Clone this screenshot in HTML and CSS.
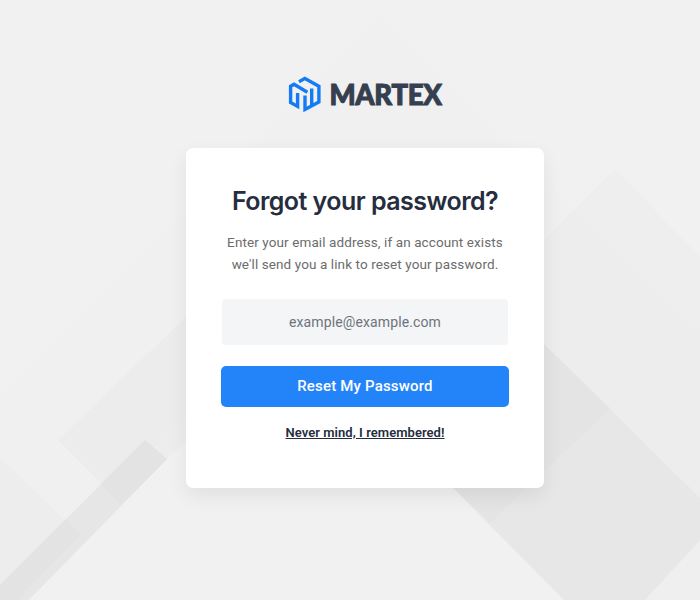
FILE: index.html
```html
<!DOCTYPE html>
<html lang="en">
<head>
<meta charset="utf-8">
<title>Martex</title>
<link rel="stylesheet" href="styles.css">
</head>
<body>
<svg class="backdrop" viewBox="0 0 700 600" aria-hidden="true">
  <path fill="#000" fill-opacity=".004" d="M380 15 0 395V600L370 238 700 560V335Z"/>
  <path fill="#000" fill-opacity=".012" d="M615 169 445 339 700 594V256Z"/>
  <path fill="#000" fill-opacity=".014" d="M58 440 200 303V430L167 459 145 440 102 484Z"/>
  <path fill="#000" fill-opacity=".01" d="M0 457 80 535 0 600Z"/>
  <path fill="#e6e6e6" d="M145 440 167 459 29 600H0V585Z"/>
  <path fill="#e3e3e3" d="M145 440 167 459 121 505 101 484ZM66 519 80 535 17 600H0V585Z"/>
  <path fill="#f1f1f1" d="M29 600 350 275 665 600Z"/>
  <path fill="#efefef" d="M645 600 700 540V600Z"/>
  <path fill="#e7e7e7" d="M534 334 700 498V540L645 600H564L453 488Z"/>
  <path fill="#000" fill-opacity=".012" d="M534 334 611 408 490 523 453 488Z"/>
</svg>
<main class="page">
  <div class="brand">
    <svg class="mark" viewBox="0 0 34 38" aria-hidden="true">
      <path d="M19.4 17.2 6 9.2 2.6 11.2V27.5L9.6 31.4V18M11 6.8 16.9 3.4 30.9 11.2V27L17 34.4V20.5M23.7 13.5V30"/>
    </svg>
    <span class="name">MARTEX</span>
  </div>
  <form class="card">
    <h1>Forgot your password?</h1>
    <p class="lead">Enter your email address, if an account exists<br>we'll send you a link to reset your password.</p>
    <input type="email" placeholder="example@example.com">
    <button type="button">Reset My Password</button>
    <a href="#">Never mind, I remembered!</a>
  </form>
</main>
</body>
</html>
```
FILE: styles.css
```css
* { box-sizing: border-box; }
body { margin: 0; height: 600px; overflow: hidden; background: #f1f1f1; font-family: Roboto, "Liberation Sans", sans-serif; }
.backdrop { position: absolute; inset: 0; width: 700px; height: 600px; }
.page { position: relative; display: flex; flex-direction: column; align-items: center; padding: 75px 0 0 30px; }
.brand { display: flex; align-items: center; gap: 7px; height: 38px; margin-bottom: 35px; }
.mark { width: 34px; height: 38px; fill: none; stroke: #147bf5; stroke-width: 3.4; }
.name { padding-top: 2px; font: 900 27.5px/38px Lato, sans-serif; color: #353f4f; letter-spacing: -0.3px; -webkit-text-stroke: 1px #353f4f; }
.card { width: 358px; height: 340px; padding: 35px 35px 0; display: flex; flex-direction: column; align-items: center; background: #fff; border-radius: 7px; box-shadow: 0 8px 20px rgba(0,0,0,.07); white-space: nowrap; }
h1 { margin: 0; font: 600 25px/36px Inter, sans-serif; letter-spacing: -.54px; color: #252d3e; }
.lead { margin: 12px 0 0; font-size: 13.5px; line-height: 22px; letter-spacing: .1px; color: #6c6c6c; text-align: center; }
input { width: 286px; height: 46px; margin: 24px 0 21px; border: 0; border-radius: 4px; background: #f4f5f7; font: 14px Roboto, sans-serif; text-align: center; letter-spacing: .12px; }
input::placeholder { color: #6d747b; opacity: 1; }
button { width: 288px; height: 41px; padding: 0 0 1px; border: 0; border-radius: 5px; background: #2384f9; color: #fff; font: 500 15px Roboto, sans-serif; letter-spacing: .18px; }
a { margin-top: 17px; font-size: 13px; line-height: 18px; font-weight: 600; letter-spacing: .05px; color: #252d3e; text-underline-offset: 1px; }
```
